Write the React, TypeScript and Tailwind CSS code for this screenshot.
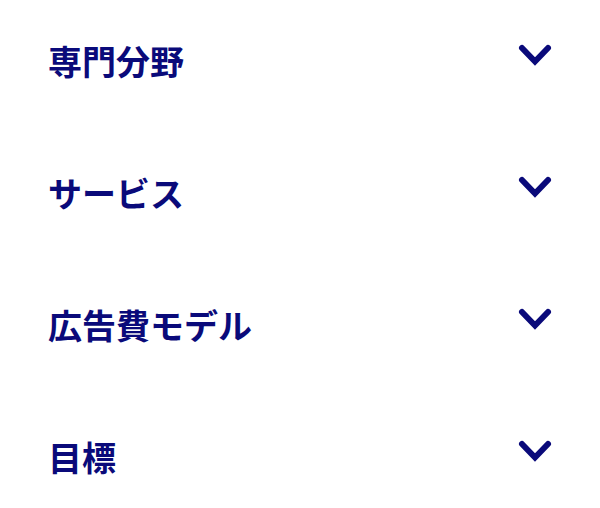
import React from 'react';

const items = ['専門分野', 'サービス', '広告費モデル', '目標'];

const Chevron: React.FC = () => (
  <svg width="34" height="24" viewBox="0 0 34 24" fill="none" className="shrink-0">
    <polyline
      points="4,4 17,17.5 30,4"
      stroke="#0a0a7a"
      strokeWidth="6"
      strokeLinecap="round"
      strokeLinejoin="miter"
    />
  </svg>
);

const App: React.FC = () => {
  return (
    <div
      className="w-[600px] h-[508px] overflow-hidden bg-white px-12 pt-[28px]"
      style={{ fontFamily: '"Noto Sans CJK JP", "Noto Sans", sans-serif' }}
    >
      <ul className="flex flex-col">
        {items.map((label) => (
          <li key={label} className="h-[132px] shrink-0">
            <button className="w-full flex items-start justify-between text-left">
              <span className="text-[34px] font-bold leading-[66px] text-[#0a0a7a]">{label}</span>
              <span className="pt-[16px]">
                <Chevron />
              </span>
            </button>
          </li>
        ))}
      </ul>
    </div>
  );
};

export default App;
